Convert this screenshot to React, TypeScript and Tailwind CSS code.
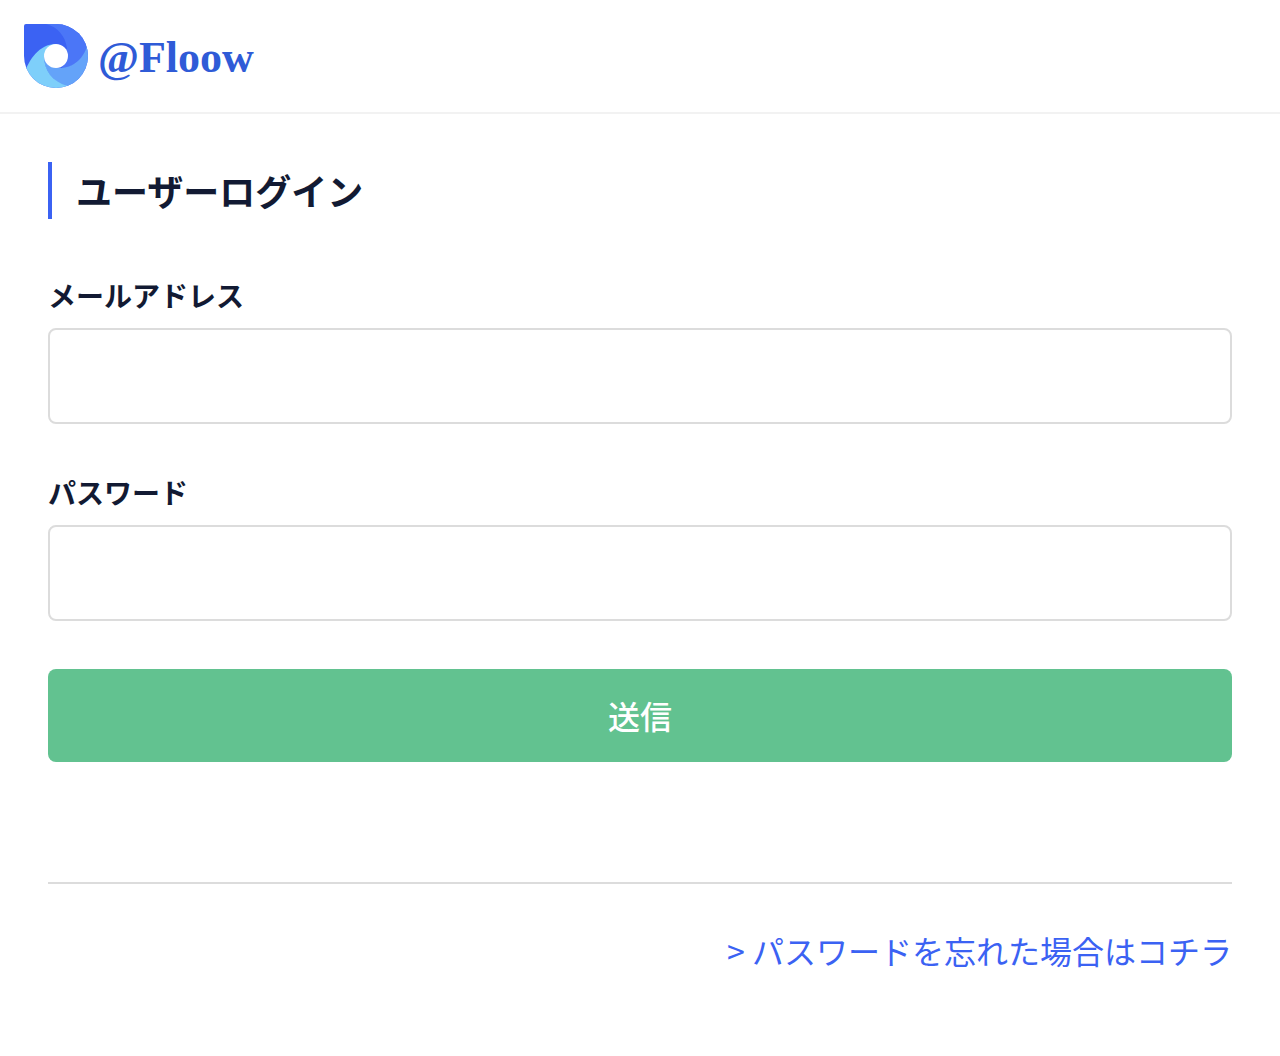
import React, { useState } from 'react';

const Logo: React.FC = () => (
  <a href="#" className="flex items-center gap-2.5">
    <svg viewBox="0 0 64 64" className="h-16 w-16" aria-hidden="true">
      <defs>
        <clipPath id="drop">
          <path d="M2 0H32A32 32 0 1 1 0 32V2A2 2 0 0 1 2 0Z" />
        </clipPath>
      </defs>
      <g clipPath="url(#drop)">
        <rect width="64" height="64" fill="#3b62f3" />
        <path d="M22 0C34 3 41 12 43 24L38 44C50 43 61 36 64 18V0Z" fill="#4b76f7" />
        <path d="M20 34C20 46 30 60 46 64H64V18C61 34 50 44 35 44Z" fill="#64a3f9" />
        <path d="M0 50C5 36 15 20 32 20L20 32C20 46 28 58 44 62V64H0Z" fill="#7ecffa" />
      </g>
      <circle cx="32" cy="32" r="12" fill="#fff" />
    </svg>
    <span className="pt-1 font-['Liberation_Serif',serif] text-[44px] leading-15 font-bold text-[#2f5bd7]">@Floow</span>
  </a>
);

interface FieldProps {
  id: string;
  label: string;
  type: string;
  value: string;
  onChange: (value: string) => void;
}

const Field: React.FC<FieldProps> = ({ id, label, type, value, onChange }) => (
  <div>
    <label htmlFor={id} className="mb-3 block text-[28px] leading-[41px] font-bold">
      {label}
    </label>
    <input
      id={id}
      type={type}
      value={value}
      onChange={(e) => onChange(e.target.value)}
      className="block h-24 w-full rounded-lg border-2 border-[#dcdcdc] bg-white px-6 text-[32px] outline-none focus:border-[#3b62f3]"
    />
  </div>
);

const App: React.FC = () => {
  const [email, setEmail] = useState('');
  const [password, setPassword] = useState('');

  return (
    <div className="min-h-screen bg-white font-['Noto_Sans_CJK_JP',sans-serif] text-[#121a33]">
      <header className="flex border-b-2 border-[#f2f2f2] p-6">
        <Logo />
      </header>

      <main className="p-12">
        <h1 className="border-l-4 border-[#3b62f3] pl-6 text-4xl leading-[57px] font-bold">ユーザーログイン</h1>

        <form className="mt-14 flex flex-col gap-12" onSubmit={(e) => e.preventDefault()}>
          <Field id="email" label="メールアドレス" type="email" value={email} onChange={setEmail} />
          <Field id="password" label="パスワード" type="password" value={password} onChange={setPassword} />
          <button
            type="submit"
            className="w-full cursor-pointer rounded-lg bg-[#62c290] py-5 text-[32px] leading-[53px] font-medium text-white"
          >
            送信
          </button>
        </form>

        {/* Password reset */}
        <div className="mt-30 border-t-2 border-[#dcdcdc] pt-10 text-right">
          <a href="#" className="text-[32px] leading-[52px] text-[#3b62f3]">
            &gt; パスワードを忘れた場合はコチラ
          </a>
        </div>
      </main>
    </div>
  );
};

export default App;
